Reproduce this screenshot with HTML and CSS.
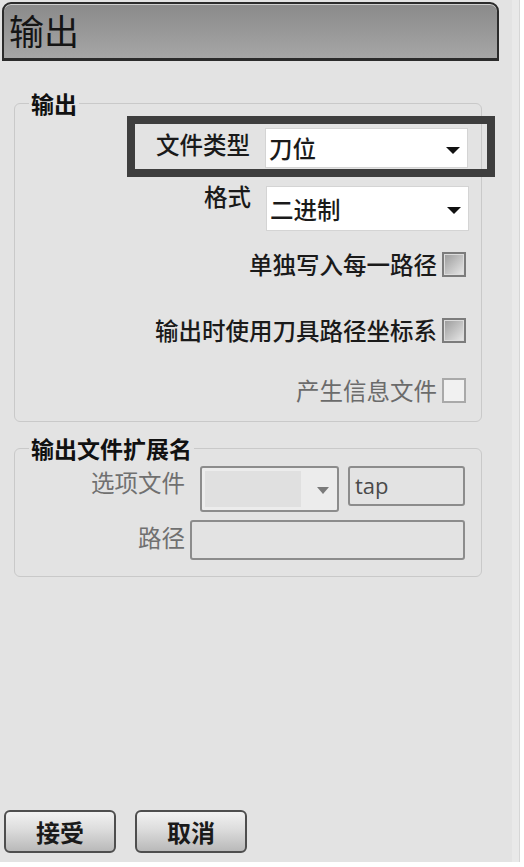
FILE: index.html
```html
<!DOCTYPE html>
<html lang="zh-CN">
<head>
    <meta charset="UTF-8">
    <meta name="viewport" content="width=device-width, initial-scale=1.0">
    <title>输出</title>
    <link rel="stylesheet" href="styles.css">
</head>
<body>
    <div class="dialog">
        <div class="title-bar">输出</div>

        <fieldset class="group group-output">
            <legend>输出</legend>
            <div class="highlight">
                <label class="field-label">文件类型</label>
                <div class="select select-type">
                    <span>刀位</span>
                    <i class="arrow"></i>
                </div>
            </div>
            <div class="row row-format">
                <label class="field-label">格式</label>
                <div class="select select-format">
                    <span>二进制</span>
                    <i class="arrow"></i>
                </div>
            </div>
            <div class="check-row check-first">
                <span>单独写入每一路径</span>
                <i class="checkbox"></i>
            </div>
            <div class="check-row check-second">
                <span>输出时使用刀具路径坐标系</span>
                <i class="checkbox"></i>
            </div>
            <div class="check-row check-third disabled">
                <span>产生信息文件</span>
                <i class="checkbox"></i>
            </div>
        </fieldset>

        <fieldset class="group group-ext">
            <legend>输出文件扩展名</legend>
            <div class="ext-row ext-first">
                <label class="ext-label">选项文件</label>
                <div class="ext-select">
                    <span class="ext-select-field"></span>
                    <i class="arrow arrow-gray"></i>
                </div>
                <div class="ext-input ext-tap">tap</div>
            </div>
            <div class="ext-row ext-second">
                <label class="ext-label">路径</label>
                <div class="ext-input ext-path"></div>
            </div>
        </fieldset>

        <div class="buttons">
            <button class="btn">接受</button>
            <button class="btn">取消</button>
        </div>
    </div>
</body>
</html>
```

FILE: styles.css
```css
html, body {
    margin: 0;
    padding: 0;
    background: #ffffff;
}
body {
    font-family: "Noto Sans CJK SC", "Noto Sans", sans-serif;
    color: #1a1a1a;
}
.dialog {
    width: 519px;
    height: 862px;
    box-sizing: border-box;
    background: #e3e3e3;
    border-right: 7px solid #e9e9e9;
    box-shadow: 1px 0 0 #d6d6d6;
    display: flex;
    flex-direction: column;
}
.title-bar {
    margin: 2px 0 0 2px;
    width: 497px;
    height: 59px;
    box-sizing: border-box;
    border: 2px solid #2b2b2b;
    border-bottom-width: 3px;
    border-radius: 9px 9px 0 0;
    background: linear-gradient(#8a8a8a, #a6a6a6);
    box-shadow: inset 0 1px 0 #cfcfcf;
    font-size: 35px;
    line-height: 52px;
    padding-left: 5px;
    color: #151515;
}
.group {
    margin: 0 0 0 14px;
    width: 468px;
    box-sizing: border-box;
    border: 1px solid #c9c9c9;
    border-radius: 6px;
    padding: 0;
    min-width: 0;
}
.group legend {
    margin-left: 14px;
    padding: 0 2px;
    font-size: 23px;
    line-height: 24px;
    font-weight: bold;
    color: #111;
}
.group-output {
    margin-top: 30px;
    padding-bottom: 18px;
}
.group-ext {
    margin-top: 14px;
    padding-bottom: 16px;
}

/* first group */
.highlight {
    display: flex;
    align-items: flex-start;
    justify-content: flex-end;
    margin-left: 112px;
    margin-right: -14px;
    margin-top: 1px;
    height: 61px;
    box-sizing: border-box;
    border: 8px solid #3e3e3e;
    padding: 4px 19px 0 0;
}
.field-label {
    font-size: 23.5px;
    line-height: 26px;
    font-weight: 500;
    margin-right: 15px;
    color: #1a1a1a;
}
.highlight .field-label {
    margin-top: 3px;
}
.row {
    display: flex;
    align-items: flex-start;
    justify-content: flex-end;
    padding-right: 12px;
}
.row-format {
    margin-top: 9px;
}
.row-format .field-label {
    margin-top: -3px;
}
.select {
    width: 203px;
    box-sizing: border-box;
    background: #ffffff;
    border: 1px solid #d4d4d4;
    display: flex;
    align-items: center;
    justify-content: space-between;
    padding: 0 7px 0 3px;
    font-size: 23.5px;
    font-weight: 500;
}
.select-type {
    height: 40px;
}
.select-format {
    height: 45px;
}
.arrow {
    width: 0;
    height: 0;
    border-left: 7px solid transparent;
    border-right: 7px solid transparent;
    border-top: 7px solid #111;
    margin-top: 4px;
}
.check-row {
    display: flex;
    align-items: center;
    justify-content: flex-end;
    padding-right: 15px;
    height: 26px;
    font-size: 23.5px;
    font-weight: 500;
    color: #1a1a1a;
}
.check-first {
    margin-top: 20px;
}
.check-second {
    margin-top: 40px;
}
.check-third {
    margin-top: 34px;
}
.check-row.disabled {
    color: #6b6b6b;
    font-weight: normal;
}
.checkbox {
    width: 24px;
    height: 25px;
    margin-left: 5px;
    box-sizing: border-box;
    border: 2px solid #7c7c7c;
    background: linear-gradient(135deg, #9a9a9a, #e9e9e9);
    box-shadow: inset 0 0 0 1px #dcdcdc;
}
.check-row.disabled .checkbox {
    border-color: #a9a9a9;
    background: #f1f1f1;
    box-shadow: none;
}

/* second group */
.ext-row {
    display: flex;
    align-items: flex-start;
}
.ext-first {
    margin-top: 6px;
}
.ext-second {
    margin-top: 8px;
}
.ext-label {
    width: 170px;
    text-align: right;
    font-size: 23.5px;
    line-height: 26px;
    color: #707070;
}
.ext-first .ext-label {
    margin-top: 3px;
}
.ext-second .ext-label {
    margin-top: 4px;
}
.ext-select {
    margin-left: 15px;
    width: 139px;
    height: 46px;
    box-sizing: border-box;
    border: 2px solid #8c8c8c;
    border-radius: 3px;
    background: #ececec;
    display: flex;
    align-items: center;
    justify-content: space-between;
    padding: 3px 8px 3px 3px;
}
.ext-select-field {
    width: 96px;
    align-self: stretch;
    background: #e0e0e0;
}
.arrow-gray {
    border-left-width: 6px;
    border-right-width: 6px;
    border-top-color: #7a7a7a;
    margin-top: 2px;
}
.ext-input {
    box-sizing: border-box;
    border: 2px solid #8c8c8c;
    border-radius: 3px;
    background: #e3e3e3;
}
.ext-tap {
    margin-left: 9px;
    width: 117px;
    height: 40px;
    font-family: "Open Sans", "Noto Sans", sans-serif;
    font-size: 22px;
    line-height: 34px;
    padding-left: 5px;
    color: #4a4a4a;
}
.ext-path {
    margin-left: 5px;
    width: 275px;
    height: 40px;
}

/* buttons */
.buttons {
    margin-top: auto;
    margin-left: 4px;
    margin-bottom: 9px;
    display: flex;
    gap: 19px;
}
.btn {
    width: 112px;
    height: 43px;
    box-sizing: border-box;
    border: 2px solid #4e4e4e;
    border-radius: 6px;
    background: linear-gradient(#f2f2f2, #dcdcdc 45%, #b9b9b9);
    font-family: "Noto Sans CJK SC", sans-serif;
    font-size: 24px;
    font-weight: bold;
    color: #1a1a1a;
    padding: 0;
    line-height: 38px;
}
```
